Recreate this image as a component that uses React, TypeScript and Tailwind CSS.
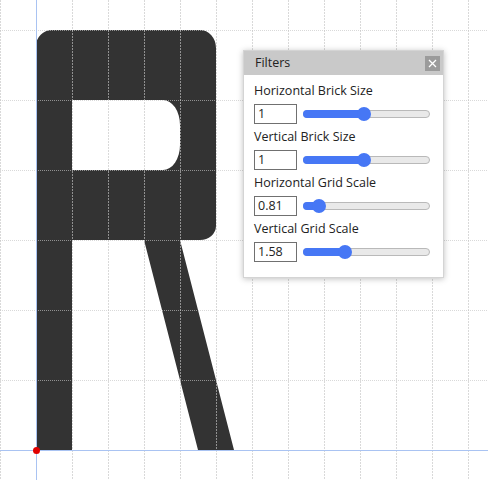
import React from 'react';

type Filter = { label: string; value: string; thumb: number };

// thumb = centre of the knob in px from the track's left edge
const filters: Filter[] = [
  { label: 'Horizontal Brick Size', value: '1', thumb: 61 },
  { label: 'Vertical Brick Size', value: '1', thumb: 61 },
  { label: 'Horizontal Grid Scale', value: '0.81', thumb: 16 },
  { label: 'Vertical Grid Scale', value: '1.58', thumb: 42 },
];

const cols = Array.from({ length: 14 }, (_, i) => i * 36);
const rows = [30, 100, 170, 240, 310, 380, 450];

const Canvas: React.FC = () => (
  <svg width={488} height={480} viewBox="0 0 488 480" className="block">
    <path
      fill="#333333"
      fillRule="evenodd"
      d="M36 450 L36 46 A16 16 0 0 1 52 30 L200 30 A16 18 0 0 1 216 48 L216 226 A16 14 0 0 1 200 240 L180 240 L234 450 L198 450 L144 240 L72 240 L72 450 Z M72 100 L163 100 A17 25 0 0 1 180 125 L180 145 A17 25 0 0 1 163 170 L72 170 Z"
    />
    <g stroke="#c4c4c4" strokeOpacity={0.65} strokeWidth={1}>
      {cols.map(x => (
        <line key={`c${x}`} x1={x + 0.5} y1={0} x2={x + 0.5} y2={480} strokeDasharray="2 1" />
      ))}
      {rows.map(y => (
        <line key={`r${y}`} x1={0} y1={y + 0.5} x2={488} y2={y + 0.5} strokeDasharray="1 1" />
      ))}
    </g>
    <line x1={36.5} y1={0} x2={36.5} y2={480} stroke="#a9c3f2" strokeWidth={1} />
    <line x1={0} y1={450.5} x2={488} y2={450.5} stroke="#a9c3f2" strokeWidth={1} />
    <circle cx={36.5} cy={450.5} r={3.5} fill="#e00000" />
  </svg>
);

const Slider: React.FC<{ thumb: number }> = ({ thumb }) => (
  <div className="relative w-[127px] h-[14px] flex items-center">
    <div className="w-full h-[8px] rounded-full bg-[#e9e9e9] border border-[#b9b9b9]" />
    <div
      className="absolute left-0 h-[8px] rounded-full bg-[#4677f5]"
      style={{ width: thumb }}
    />
    <div
      className="absolute top-0 w-[14px] h-[14px] rounded-full bg-[#4677f5]"
      style={{ left: thumb - 7 }}
    />
  </div>
);

const FilterPanel: React.FC = () => (
  <div className="absolute left-[243px] top-[50px] w-[201px] h-[228px] bg-white border border-[#d4d4d4] shadow-[0_1px_6px_rgba(0,0,0,0.25)] text-[#222]">
    <div className="h-[24px] bg-[#c9c9c9] flex items-center justify-between pl-[11px] pr-[3px]">
      <span className="text-[12.5px]">Filters</span>
      <button className="w-[15px] h-[15px] bg-[#9b9b9b] flex items-center justify-center">
        <svg width="9" height="9" viewBox="0 0 9 9">
          <path d="M1 1 L8 8 M8 1 L1 8" stroke="#fff" strokeWidth="1.3" />
        </svg>
      </button>
    </div>
    <div className="pt-[4px] pl-[10px] flex flex-col gap-[1px]">
      {filters.map(f => (
        <div key={f.label} className="flex flex-col">
          <div className="h-[25px] flex items-center text-[12.5px]">{f.label}</div>
          <div className="flex items-center gap-[6px]">
            <div className="w-[43px] h-[20px] border border-[#707070] bg-white flex items-center px-[3px] text-[12.5px]">
              {f.value}
            </div>
            <Slider thumb={f.thumb} />
          </div>
        </div>
      ))}
    </div>
  </div>
);

const App: React.FC = () => (
  <div className="relative w-[488px] h-[480px] bg-white overflow-hidden" style={{ fontFamily: '"Open Sans", "Noto Sans", sans-serif' }}>
    <Canvas />
    <FilterPanel />
  </div>
);

export default App;
